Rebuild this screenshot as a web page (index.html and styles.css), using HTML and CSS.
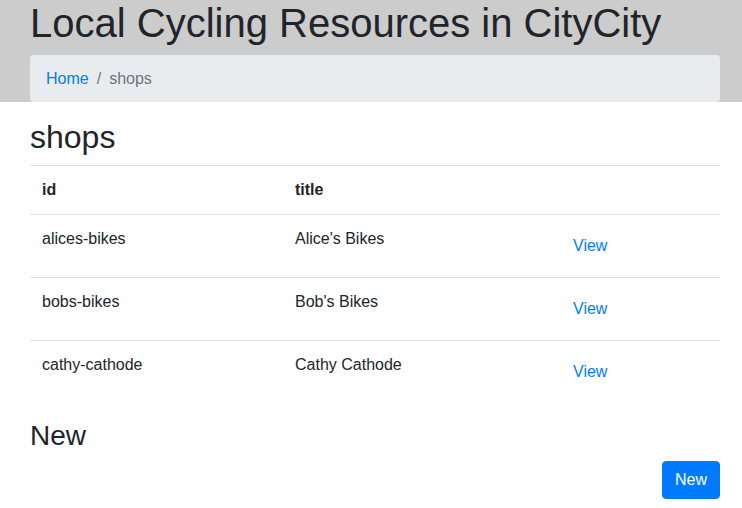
FILE: index.html
```html
<!DOCTYPE html>
<html lang="en">
<head>
<meta charset="utf-8">
<title>Local Cycling Resources in CityCity</title>
<link rel="stylesheet" href="styles.css">
</head>
<body>
<header class="site-header">
  <div class="container">
    <h1 class="site-title">Local Cycling Resources in CityCity</h1>
    <nav class="breadcrumb">
      <a class="crumb-link" href="#">Home</a>
      <span class="crumb-sep">/</span>
      <span class="crumb-active">shops</span>
    </nav>
  </div>
</header>
<main class="container">
  <h2 class="section-title">shops</h2>
  <table class="table">
    <tr>
      <th class="col-id">id</th>
      <th class="col-title">title</th>
      <th></th>
    </tr>
    <tr>
      <td>alices-bikes</td>
      <td>Alice's Bikes</td>
      <td><a class="btn-link" href="#">View</a></td>
    </tr>
    <tr>
      <td>bobs-bikes</td>
      <td>Bob's Bikes</td>
      <td><a class="btn-link" href="#">View</a></td>
    </tr>
    <tr>
      <td>cathy-cathode</td>
      <td>Cathy Cathode</td>
      <td><a class="btn-link" href="#">View</a></td>
    </tr>
  </table>
  <h3 class="sub-title">New</h3>
  <div class="actions">
    <a class="btn-primary" href="#">New</a>
  </div>
</main>
</body>
</html>
```

FILE: styles.css
```css
* { box-sizing: border-box; }
html, body { margin: 0; padding: 0; }
body {
  font-family: "Liberation Sans", Arial, sans-serif;
  font-size: 16px;
  line-height: 1.5;
  color: #212529;
  background: #fff;
}
a { text-decoration: none; }
.container {
  padding-left: 30px;
  padding-right: 22px;
}
.site-header {
  background: #cccccc;
}
.site-title {
  margin: 0 0 8px 0;
  font-size: 40px;
  font-weight: 500;
  line-height: 47px;
}
.breadcrumb {
  display: flex;
  align-items: center;
  margin: 0;
  padding: 12px 16px 11px;
  line-height: 24px;
  background: #e9ecef;
  border-radius: 4px;
}
.crumb-link { color: #007bff; }
.crumb-sep { color: #6c757d; padding: 0 8px; }
.crumb-active { color: #6c757d; }
.section-title {
  margin: 16px 0 8px 0;
  font-size: 32px;
  font-weight: 500;
  line-height: 39px;
}
.table {
  width: 100%;
  border-collapse: collapse;
  margin-bottom: 16px;
}
.table th, .table td {
  padding: 12px;
  border-top: 1px solid #dee2e6;
  vertical-align: top;
  text-align: left;
  line-height: 24px;
}
.table th { font-weight: 700; }
.col-id { width: 253px; }
.col-title { width: 265px; }
.btn-link {
  display: inline-block;
  vertical-align: top;
  padding: 6px 12px;
  line-height: 24px;
  border: 1px solid transparent;
  color: #007bff;
}
.sub-title {
  margin: 0 0 8px 0;
  font-size: 28px;
  font-weight: 500;
  line-height: 1.2;
}
.actions {
  display: flex;
  justify-content: flex-end;
}
.btn-primary {
  display: inline-block;
  padding: 6px 12px;
  line-height: 24px;
  border: 1px solid #007bff;
  background: #007bff;
  color: #fff;
  border-radius: 4px;
}
```
